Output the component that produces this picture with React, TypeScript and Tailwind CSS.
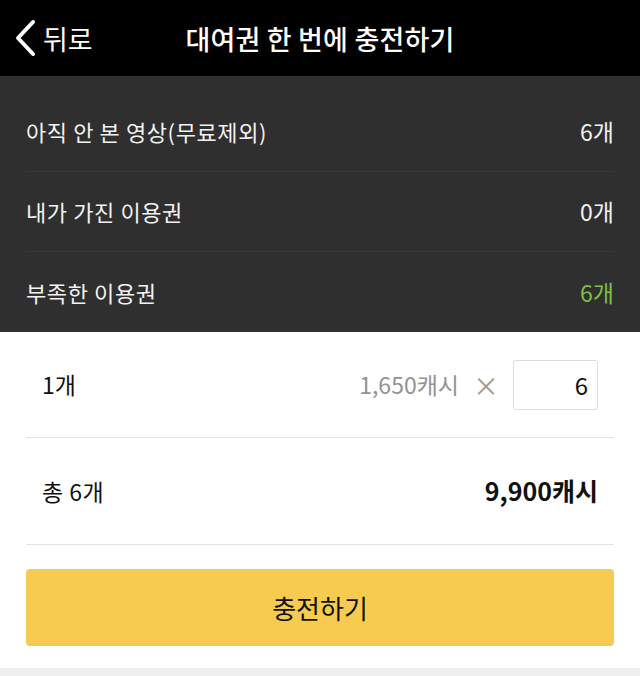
import React from "react";

const font = { fontFamily: '"Noto Sans CJK KR", "Noto Sans", sans-serif' };

function Row({ label, value, green, last }: { label: string; value: string; green?: boolean; last?: boolean }) {
  return (
    <div className={`flex h-[80px] items-center justify-between ${last ? "" : "border-b border-[#383838]"}`}>
      <span className="text-[22px] tracking-[0.6px] text-[#f2f2f2]">{label}</span>
      <span className={`text-[23px] ${green ? "text-[#7cc242]" : "text-[#f2f2f2]"}`}>{value}</span>
    </div>
  );
}

export default function App() {
  return (
    <div className="w-[640px] h-[676px] bg-white flex flex-col overflow-hidden" style={font}>
      <header className="relative h-[76px] bg-black flex items-center shrink-0">
        <div className="flex items-center pl-[14px] gap-[5px]">
          <svg width="24" height="38" viewBox="0 0 24 38" fill="none">
            <polyline points="19,3 4,19 19,35" stroke="white" strokeWidth="4" strokeLinecap="round" strokeLinejoin="round" />
          </svg>
          <span className="text-white text-[27px] leading-none">뒤로</span>
        </div>
        <h1 className="absolute left-0 right-0 text-center text-white text-[27px] tracking-[0.2px] font-medium leading-none pointer-events-none">
          대여권 한 번에 충전하기
        </h1>
      </header>

      <section className="bg-[#2f2f2f] pt-[16px] px-[26px] shrink-0">
        <Row label="아직 안 본 영상(무료제외)" value="6개" />
        <Row label="내가 가진 이용권" value="0개" />
        <Row label="부족한 이용권" value="6개" green last />
      </section>

      <section className="px-[26px] flex-1 flex flex-col">
        <div className="flex h-[106px] items-center justify-between border-b border-[#e3e3e3] px-[16px]">
          <span className="text-[23px] text-[#111]">1개</span>
          <div className="flex items-center">
            <span className="text-[23px] text-[#939393]">1,650캐시</span>
            <span className="text-[26px] text-[#9a9a9a] ml-[14px] mr-[14px] leading-none">×</span>
            <div className="w-[85px] h-[50px] border border-[#dcdcdc] rounded-[3px] flex items-center justify-end pr-[9px] text-[24px] text-[#111]">
              6
            </div>
          </div>
        </div>
        <div className="flex h-[107px] items-center justify-between border-b border-[#e3e3e3] px-[16px]">
          <span className="text-[23px] tracking-[0.5px] text-[#111]">총 6개</span>
          <span className="text-[25px] font-bold text-[#111]">9,900캐시</span>
        </div>
        <div className="pt-[24px]">
          <button className="w-full h-[77px] rounded-[4px] bg-[#f7cb4f] text-[26px] text-[#111] flex items-center justify-center">
            충전하기
          </button>
        </div>
      </section>
      <div className="h-[8px] bg-[#efefef] shrink-0" />
    </div>
  );
}
